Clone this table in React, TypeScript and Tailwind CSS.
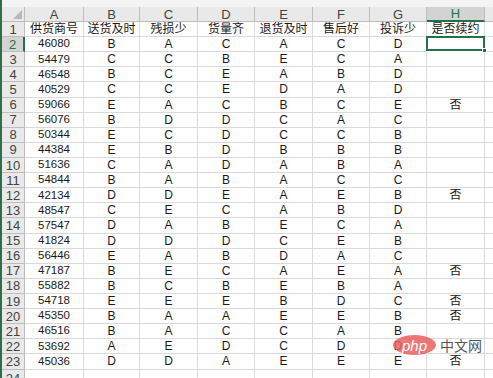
import React from 'react';

const cols = ['A', 'B', 'C', 'D', 'E', 'F', 'G', 'H'];
const headers = ['供货商号', '送货及时', '残损少', '货量齐', '退货及时', '售后好', '投诉少', '是否续约'];

const rows: string[][] = [
  ['46080', 'B', 'A', 'C', 'A', 'C', 'D', ''],
  ['54479', 'C', 'C', 'B', 'E', 'C', 'A', ''],
  ['46548', 'B', 'C', 'E', 'A', 'B', 'D', ''],
  ['40529', 'C', 'C', 'E', 'D', 'A', 'D', ''],
  ['59066', 'E', 'A', 'C', 'B', 'C', 'E', '否'],
  ['56076', 'B', 'D', 'D', 'C', 'A', 'C', ''],
  ['50344', 'E', 'C', 'D', 'C', 'C', 'B', ''],
  ['44384', 'E', 'B', 'D', 'B', 'B', 'B', ''],
  ['51636', 'C', 'A', 'D', 'A', 'B', 'A', ''],
  ['54844', 'B', 'A', 'B', 'A', 'C', 'C', ''],
  ['42134', 'D', 'D', 'E', 'A', 'E', 'B', '否'],
  ['48547', 'C', 'E', 'C', 'A', 'B', 'D', ''],
  ['57547', 'D', 'A', 'B', 'E', 'C', 'A', ''],
  ['41824', 'D', 'D', 'D', 'C', 'E', 'B', ''],
  ['56446', 'E', 'A', 'B', 'D', 'A', 'C', ''],
  ['47187', 'B', 'E', 'C', 'A', 'E', 'A', '否'],
  ['55882', 'B', 'C', 'B', 'E', 'B', 'A', ''],
  ['54718', 'E', 'E', 'E', 'B', 'D', 'C', '否'],
  ['45350', 'B', 'A', 'A', 'E', 'E', 'B', '否'],
  ['46516', 'B', 'A', 'C', 'C', 'A', 'B', ''],
  ['53692', 'A', 'E', 'D', 'C', 'D', 'D', ''],
  ['45036', 'D', 'D', 'A', 'E', 'E', 'E', '否'],
];

const grid = 'grid grid-cols-[23px_59px_56px_58px_57px_58px_57px_57px_58px_1fr]';
const cell = 'h-[15.12px] border-r border-b border-[#dadada] flex items-center justify-center leading-none';
const rowHead = 'h-[15.12px] bg-[#e9e9e9] border-r border-b border-[#bdbdbd] flex items-center justify-center text-[13px] leading-none text-[#444]';

function App() {
  return (
    <div
      className="relative w-[493px] h-[378px] overflow-hidden bg-white border-l-2 border-[#2f6e4a] text-[12px] text-[#1a1a1a]"
      style={{ fontFamily: '"Liberation Sans", "Noto Sans CJK SC", sans-serif' }}
    >
      <div className="h-[7px] bg-[#f4f4f4]" />

      {/* column letters */}
      <div className={grid}>
        <div className="relative h-[15px] bg-[#e9e9e9] border-r border-b border-[#bdbdbd]">
          <div className="absolute right-[2px] bottom-[2px] w-0 h-0 border-l-[9px] border-l-transparent border-b-[9px] border-b-[#b8b8b8]" />
        </div>
        {cols.map((c) =>
          c === 'H' ? (
            <div key={c} className="h-[15px] bg-[#d3d3d3] border-r border-[#bdbdbd] border-b-2 border-b-[#217346] flex items-center justify-center text-[13px] leading-none text-[#217346]">
              {c}
            </div>
          ) : (
            <div key={c} className="h-[15px] bg-[#e9e9e9] border-r border-b border-[#bdbdbd] flex items-center justify-center text-[13px] leading-none text-[#444]">
              {c}
            </div>
          )
        )}
        <div className="h-[15px] bg-[#e9e9e9] border-b border-[#bdbdbd]" />
      </div>

      {/* header row */}
      <div className={grid}>
        <div className={rowHead}>1</div>
        {headers.map((h) => (
          <div key={h} className={cell}>
            {h}
          </div>
        ))}
        <div className="h-[15.12px] border-b border-[#dadada]" />
      </div>

      {rows.map((r, i) => (
        <div key={i} className={grid}>
          {i === 0 ? (
            <div className="h-[15.12px] bg-[#d3d3d3] border-r-2 border-r-[#217346] border-b border-[#bdbdbd] flex items-center justify-center text-[13px] leading-none text-[#217346]">
              2
            </div>
          ) : (
            <div className={rowHead}>{i + 2}</div>
          )}
          {r.map((v, j) =>
            i === 0 && j === 7 ? (
              <div key={j} className="relative h-[15.12px] border-2 border-[#217346] -mt-px -ml-px">
                <div className="absolute -right-[4px] -bottom-[4px] w-[5px] h-[5px] bg-[#217346] border border-white" />
              </div>
            ) : (
              <div key={j} className={`${cell} ${j === 0 ? 'text-[11.5px]' : ''}`}>
                {v}
              </div>
            )
          )}
          <div className="h-[15.12px] border-b border-[#dadada]" />
        </div>
      ))}

      <div className={grid}>
        <div className="h-[15px] bg-[#e9e9e9] border-r border-[#bdbdbd] flex items-start pt-[2px] justify-center text-[13px] leading-none text-[#444]">24</div>
        {cols.map((c) => (
          <div key={c} className="h-[15px] border-r border-[#dadada]" />
        ))}
        <div />
      </div>

      {/* watermark */}
      <div className="absolute left-[391px] top-[335px] flex items-center gap-[4px]">
        <div className="w-[43px] h-[20px] rounded-[50%] bg-[#e8605f]/85 flex items-center justify-center">
          <span className="text-white italic text-[15px] leading-none" style={{ fontFamily: '"Liberation Sans", sans-serif' }}>php</span>
        </div>
        <span className="text-[#555] text-[14px] leading-none" style={{ fontFamily: '"Noto Sans CJK SC", sans-serif' }}>中文网</span>
      </div>
    </div>
  );
}

export default App;
